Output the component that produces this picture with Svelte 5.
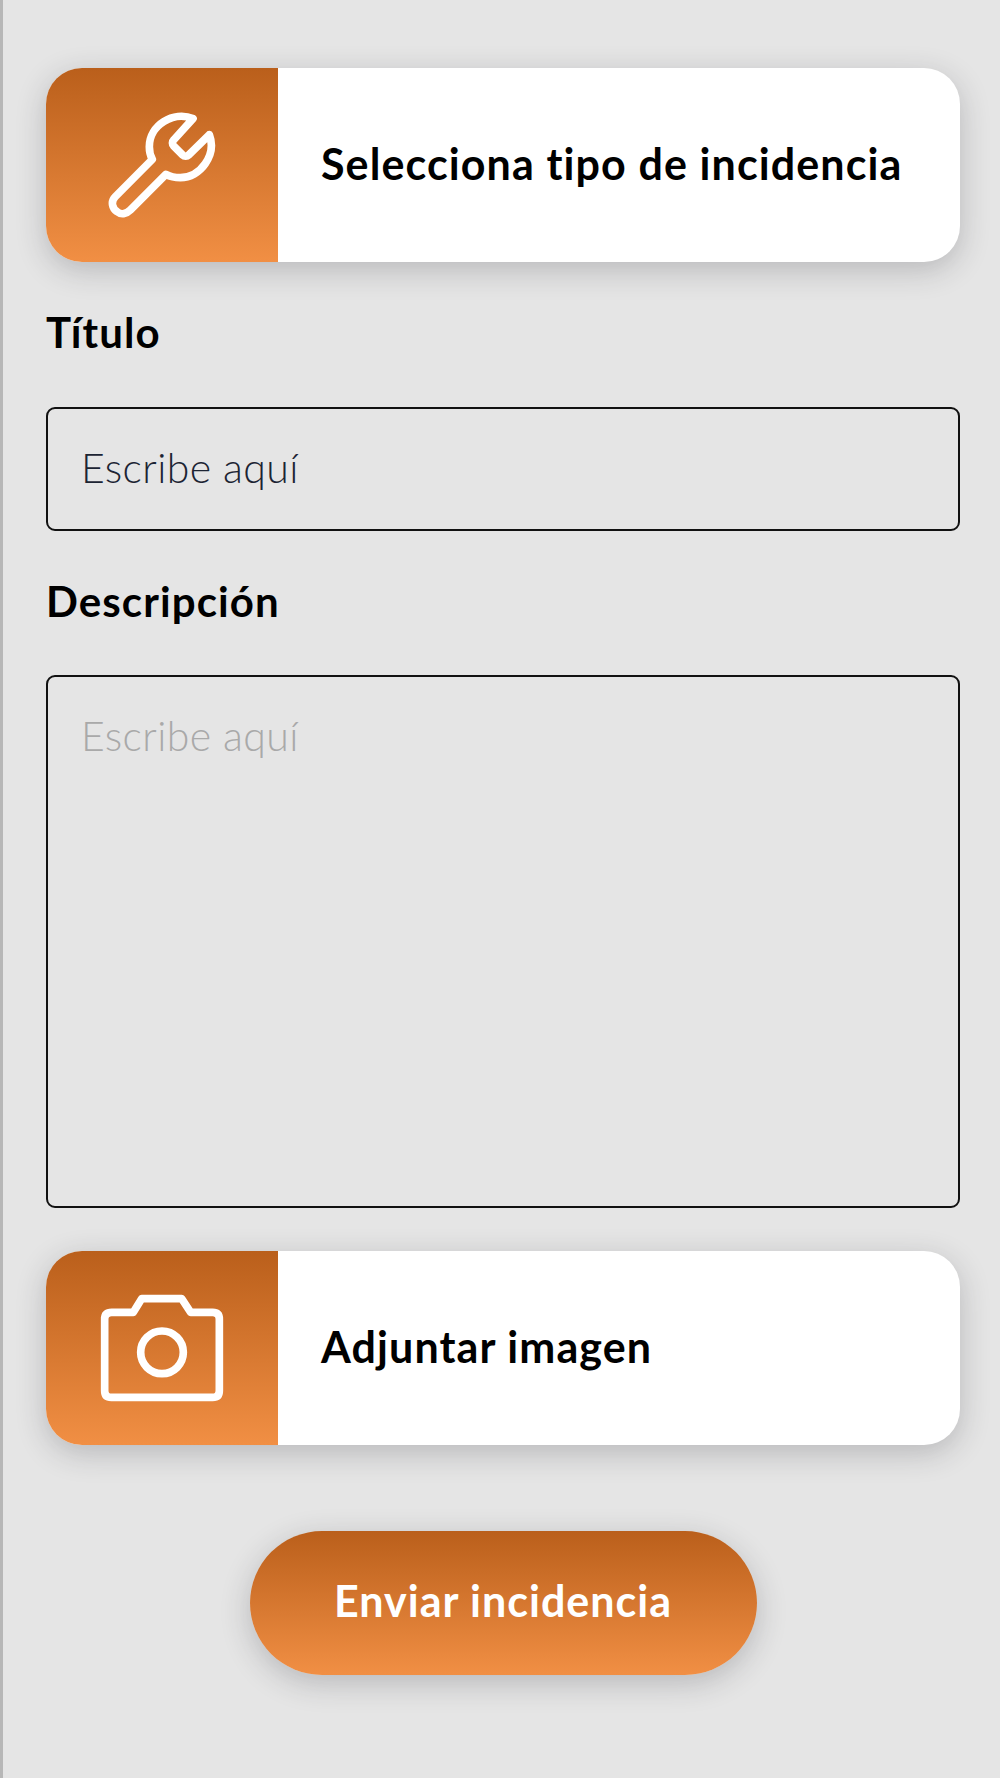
<script>
  let title = $state('');
  let description = $state('');
</script>

<main class="page">
  <button type="button" class="card">
    <span class="card-icon">
      <svg viewBox="320 210 330 330" width="110" height="110" fill="none" stroke="#fff" stroke-width="23" stroke-linejoin="round" aria-hidden="true">
        <path d="M578 236C520 212 447 255 447 320C447 335 450 347 456 358L345 470C330 485 336 505 350 515C362 525 378 522 390 510L497 403C510 410 525 413 540 413C600 413 650 345 627 284L565 345C560 350 552 350 547 345L520 318C515 313 515 305 520 300Z" />
      </svg>
    </span>
    <span class="card-label">Selecciona tipo de incidencia</span>
  </button>

  <label class="field-label" for="titulo">Título</label>
  <input id="titulo" class="input" type="text" placeholder="Escribe aquí" bind:value={title} />

  <label class="field-label desc" for="descripcion">Descripción</label>
  <textarea id="descripcion" class="input area" placeholder="Escribe aquí" bind:value={description}></textarea>

  <button type="button" class="card attach">
    <span class="card-icon">
      <svg viewBox="201 160 390 390" width="130" height="130" fill="none" stroke="#fff" stroke-width="23" stroke-linejoin="round" aria-hidden="true">
        <path d="M245 248H310L335 207H455L482 248H548Q568 248 568 268V483Q568 503 548 503H244Q224 503 224 483V268Q224 248 245 248Z" />
        <circle cx="396" cy="368" r="64" />
      </svg>
    </span>
    <span class="card-label">Adjuntar imagen</span>
  </button>

  <button type="button" class="send">Enviar incidencia</button>
</main>

<style>
  :global(body) {
    background: #e5e5e5;
  }
  .page {
    box-sizing: border-box;
    min-height: 1778px;
    padding: 68px 40px 0 43px;
    border-left: 3px solid #b7b7b7;
    display: flex;
    flex-direction: column;
    font-family: Lato, "Noto Sans", sans-serif;
    font-variant-ligatures: none;
    color: #000;
  }
  button {
    font-family: inherit;
    font-variant-ligatures: none;
    border: none;
    cursor: pointer;
    padding: 0;
  }
  .card {
    display: flex;
    align-items: stretch;
    height: 194px;
    flex: none;
    background: #fff;
    border-radius: 36px;
    overflow: hidden;
    text-align: left;
    box-shadow: 0 8px 30px rgba(40, 40, 50, 0.24);
  }
  .card-icon {
    width: 232px;
    flex: none;
    display: flex;
    align-items: center;
    justify-content: center;
    background: linear-gradient(180deg, #ba5f1b, #f18f44);
  }
  .card-label {
    align-self: center;
    margin: 0 0 4px 43px;
    font-size: 43px;
    font-weight: 700;
    letter-spacing: 1.1px;
    color: #000;
  }
  .field-label {
    margin-top: 45px;
    height: 50px;
    line-height: 50px;
    font-size: 42px;
    font-weight: 700;
    letter-spacing: 1.1px;
  }
  .input {
    box-sizing: border-box;
    margin-top: 50px;
    width: 100%;
    height: 124px;
    padding: 0 33px 4px;
    background: transparent;
    border: 2px solid #111;
    border-radius: 9px;
    outline: none;
    font-family: inherit;
    font-size: 41px;
    font-weight: 300;
    letter-spacing: 0.4px;
    color: #1c2433;
  }
  #titulo::placeholder {
    color: #1c2433;
    opacity: 1;
  }
  .area {
    display: block;
    margin-top: 49px;
    height: 533px;
    padding-top: 34px;
    resize: none;
  }
  .area::placeholder {
    color: #a9a9a9;
    opacity: 1;
  }
  .attach {
    margin-top: 43px;
  }
  .send {
    align-self: center;
    margin-top: 86px;
    padding-bottom: 5px;
    width: 507px;
    height: 144px;
    flex: none;
    border-radius: 72px;
    background: linear-gradient(180deg, #ba5f1b, #f18f44);
    color: #fff;
    font-size: 43px;
    font-weight: 700;
    letter-spacing: 1px;
    box-shadow: 0 8px 30px rgba(40, 40, 50, 0.24);
  }
</style>
